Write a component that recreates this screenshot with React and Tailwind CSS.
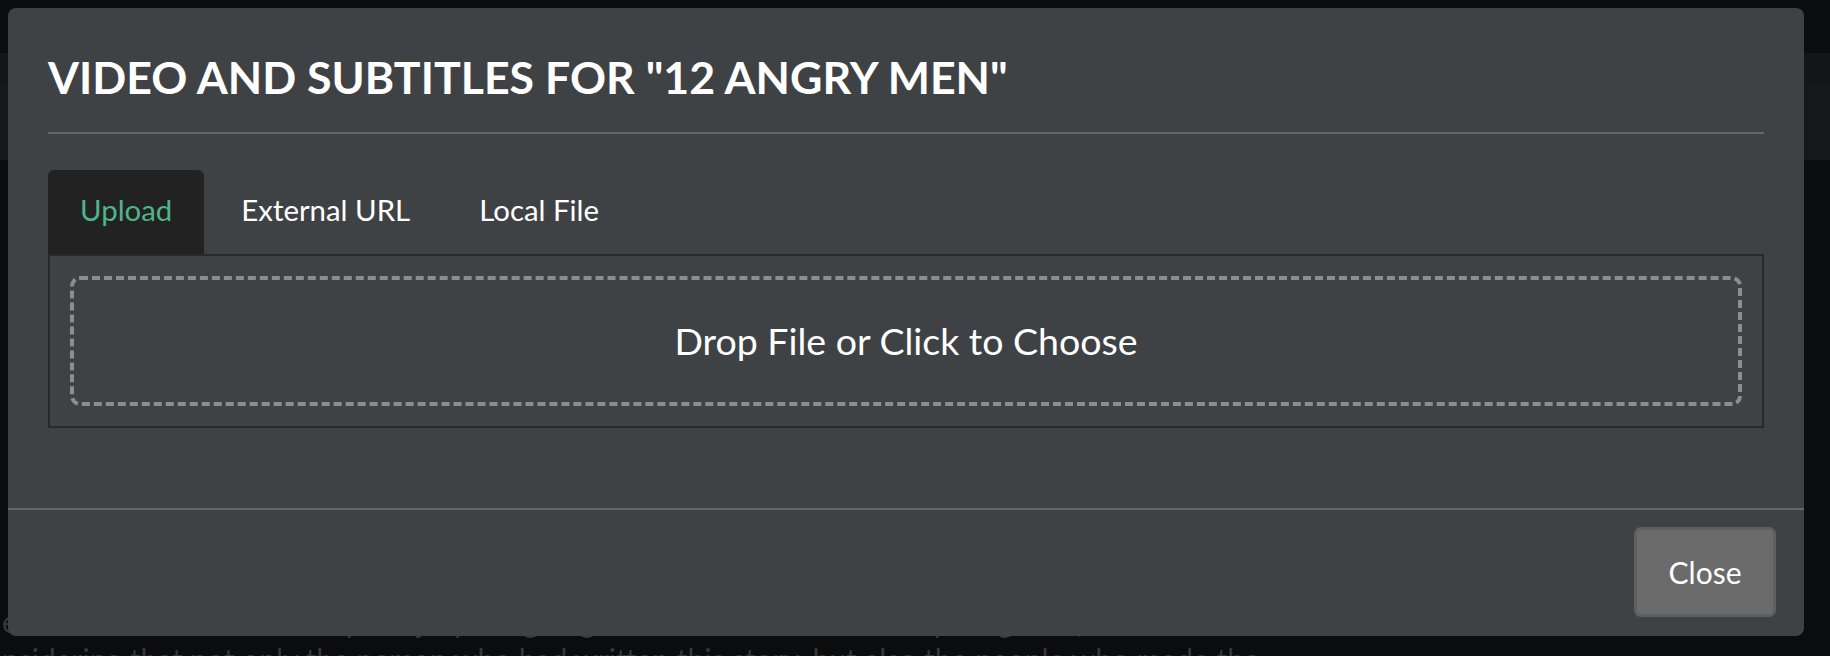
import React, { useState } from 'react';

const tabs = ['Upload', 'External URL', 'Local File'];

const App = () => {
  const [active, setActive] = useState('Upload');

  return (
    <div className="relative w-[1830px] h-[656px] overflow-hidden bg-[#0b0c0e] font-['Lato',sans-serif]">
      {/* dimmed page behind the modal */}
      <div className="flex flex-col pt-[53px]">
        <div className="h-[33px] bg-[#141517]" />
        <div className="h-[74px] bg-[#17181a]" />
        <div className="mt-[444px] px-[2px] flex flex-col gap-[4px] text-[30px] leading-[34px] text-[#36373a] whitespace-nowrap">
          <div>eo ones thus mentioned by the jury are going to decide the fate of this young man, the one</div>
          <div>nsidering that not only the person who had written this story, but also the people who made the</div>
        </div>
      </div>

      <div className="absolute left-[8px] top-[8px] w-[1796px] h-[628px] rounded-[8px] bg-[#3f4245] flex flex-col">
        <div className="mx-[40px] pt-[43px] pb-[28px] border-b-2 border-[#62666a]">
          <h2 className="text-[44.7px] leading-[53px] font-bold text-white">
            VIDEO AND SUBTITLES FOR "12 ANGRY MEN"
          </h2>
        </div>

        <div className="mx-[40px] mt-[36px]">
          <div className="flex gap-[5px]">
            {tabs.map(tab => (
              <button
                key={tab}
                onClick={() => setActive(tab)}
                className={`px-[32px] pt-[22px] pb-[26px] text-[29.4px] leading-[36px] rounded-t-[6px] ${
                  active === tab ? 'bg-[#222222] text-[#4fb38b]' : 'text-white'
                }`}
              >
                {tab}
              </button>
            ))}
          </div>
          <div className="border-2 border-[#29292a] p-[20px]">
            <div className="h-[130px] rounded-[10px] border-4 border-dashed border-[#8d8d8d] flex items-center justify-center">
              <span className="text-[37.5px] leading-[46px] text-white">Drop File or Click to Choose</span>
            </div>
          </div>
        </div>

        <div className="mt-[80px] border-t-2 border-[#62666a] flex justify-end px-[28px] pt-[17px]">
          <button className="w-[142px] h-[90px] rounded-[7px] border-[3px] border-[#5d5f61] bg-[#6b6b6b] text-white text-[30px]">
            Close
          </button>
        </div>
      </div>
    </div>
  );
};

export default App;
